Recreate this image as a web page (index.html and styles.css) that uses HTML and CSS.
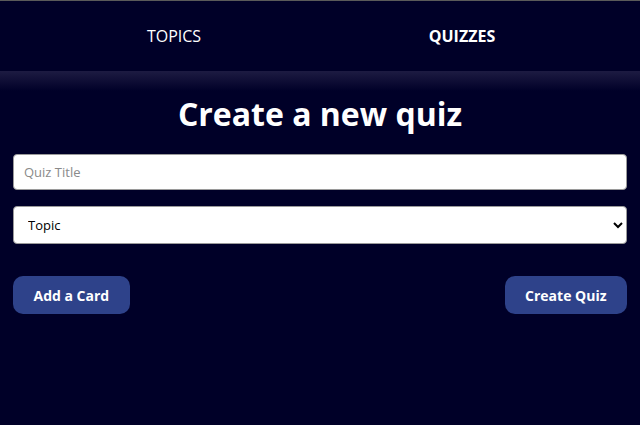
FILE: index.html
```html
<!DOCTYPE html>
<html>
<head>
<meta charset="utf-8">
<link rel="stylesheet" href="styles.css">
</head>
<body>
<nav class="nav">
  <ul class="nav-list">
    <li class="nav-item"><a class="nav-link" href="#">TOPICS</a></li>
    <li class="nav-item"><a class="nav-link active" href="#">QUIZZES</a></li>
  </ul>
</nav>
<div class="glow"></div>
<main class="main">
  <h1 class="title">Create a new quiz</h1>
  <form class="form">
    <input class="field" type="text" placeholder="Quiz Title">
    <select class="field select">
      <option>Topic</option>
    </select>
    <div class="actions">
      <button type="button" class="btn">Add a Card</button>
      <button type="button" class="btn">Create Quiz</button>
    </div>
  </form>
</main>
</body>
</html>
```

FILE: styles.css
```css
html, body {
  margin: 0;
  padding: 0;
  background: #000028;
  font-family: "Open Sans", "Noto Sans", sans-serif;
  color: #fff;
}
body {
  border-top: 1px solid #5a5a5a;
  height: 424px;
  overflow: hidden;
}
.nav {
  height: 70px;
  background: #000028;
}
.nav-list {
  list-style: none;
  margin: 0;
  padding: 0 34px 0 30px;
  height: 100%;
  display: flex;
  align-items: center;
}
.nav-item {
  flex: 1;
  text-align: center;
}
.nav-link {
  color: #fff;
  text-decoration: none;
  font-size: 16px;
}
.nav-link.active {
  font-weight: 700;
}
.glow {
  height: 20px;
  background: linear-gradient(#1d1b42, #000028);
  margin-bottom: -20px;
}
.main {
  padding: 0 13px;
}
.title {
  margin: 0;
  padding-top: 21px;
  text-align: center;
  font-size: 32px;
  font-weight: 700;
  line-height: 44px;
}
.form {
  display: flex;
  flex-direction: column;
  gap: 16px;
  margin-top: 18px;
}
.field {
  box-sizing: border-box;
  width: 100%;
  height: 36px;
  border: 1px solid #9a9a9a;
  border-radius: 4px;
  background: #fff;
  font-family: "Open Sans", sans-serif;
  font-size: 13px;
  padding: 0 10px;
  color: #000;
}
.field::placeholder {
  color: #8a8a8a;
}
.select {
  height: 38px;
  padding: 0 10px;
}
.actions {
  display: flex;
  justify-content: space-between;
  margin-top: 16px;
}
.btn {
  height: 38px;
  padding: 0 20.5px;
  border: none;
  border-radius: 10px;
  background: #2e428a;
  color: #fff;
  font-family: "Open Sans", sans-serif;
  font-weight: 700;
  font-size: 14px;
}
```
